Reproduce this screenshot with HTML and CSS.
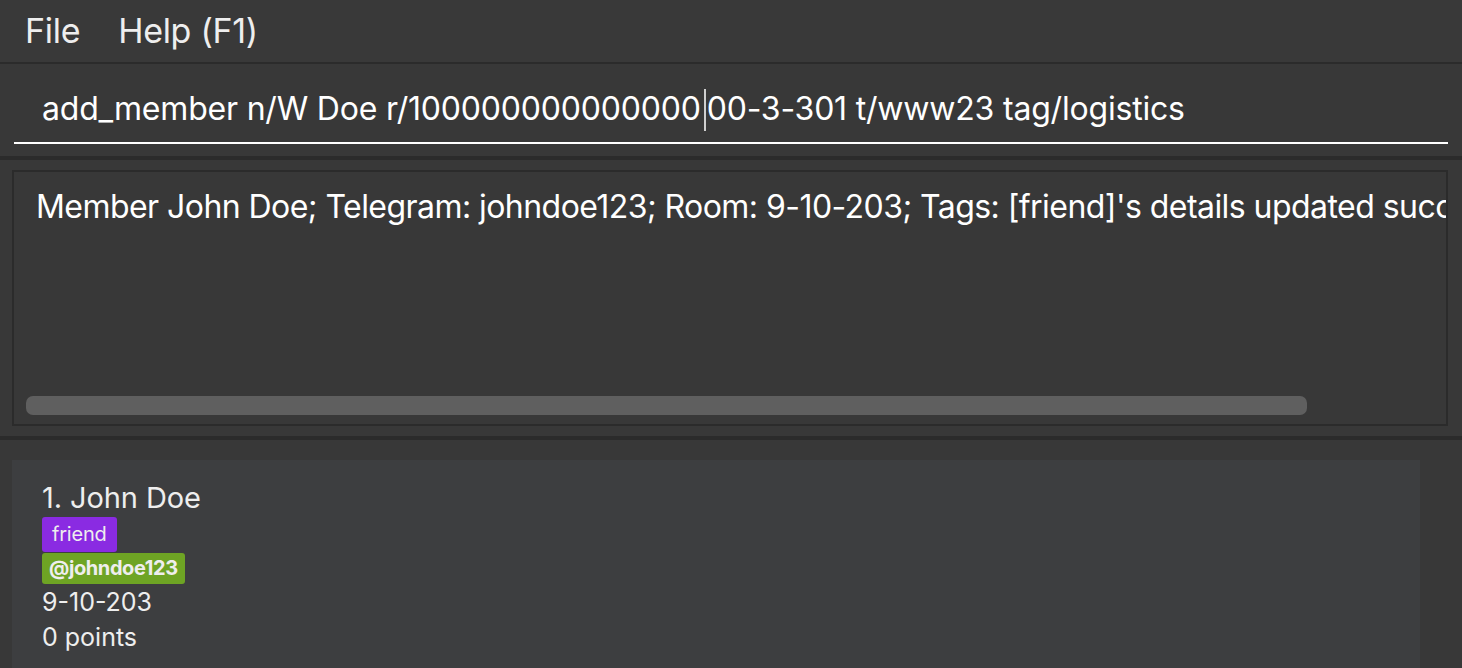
FILE: index.html
```html
<!DOCTYPE html>
<html>
<head>
<meta charset="utf-8">
<link rel="stylesheet" href="styles.css">
</head>
<body>
<div class="app">
  <div class="menubar">
    <span class="menu-item">File</span>
    <span class="menu-item">Help (F1)</span>
  </div>
  <div class="command-area">
    <div class="command-box">
      <span class="command-text">add_member n/W Doe r/100000000000000<span class="caret"></span>00-3-301 t/www23 tag/logistics</span>
    </div>
  </div>
  <div class="result-area">
    <div class="result-box">
      <div class="result-text">Member John Doe; Telegram: johndoe123; Room: 9-10-203; Tags: [friend]'s details updated successfully</div>
      <div class="scrollbar"><div class="thumb"></div></div>
    </div>
  </div>
  <div class="list-area">
    <div class="card">
      <div class="name">1. John Doe</div>
      <div class="tags"><span class="tag">friend</span></div>
      <div class="tags"><span class="telegram">@johndoe123</span></div>
      <div class="line">9-10-203</div>
      <div class="line">0 points</div>
    </div>
  </div>
</div>
</body>
</html>
```
FILE: styles.css
```css
html, body {
  margin: 0;
  padding: 0;
  background: #383838;
  font-family: Inter, "Noto Sans", sans-serif;
  color: #ffffff;
  overflow: hidden;
}
.app {
  width: 1462px;
  height: 668px;
  display: flex;
  flex-direction: column;
}
.menubar {
  height: 62px;
  border-bottom: 2px solid #2b2b2b;
  display: flex;
  align-items: center;
  padding-left: 25px;
  gap: 38px;
  box-sizing: content-box;
  background: #393939;
}
.menu-item {
  font-size: 34px;
  color: #eeeeee;
  letter-spacing: -0.3px;
  margin-top: -2px;
}
.command-area {
  height: 92px;
  border-bottom: 4px solid #2b2b2b;
  padding: 0 14px;
  box-sizing: content-box;
}
.command-box {
  height: 80px;
  border-bottom: 2px solid #ffffff;
  display: flex;
  align-items: center;
  padding-left: 28px;
  padding-top: 14px;
  box-sizing: border-box;
}
.command-text {
  font-size: 32px;
  letter-spacing: -0.2px;
  white-space: nowrap;
  color: #ffffff;
}
.caret {
  display: inline-block;
  width: 2px;
  height: 42px;
  background: #cfcfcf;
  vertical-align: -11px;
  margin: 0 1px 0 3px;
}
.result-area {
  border-bottom: 4px solid #2b2b2b;
  padding: 10px 14px 10px 12px;
  box-sizing: border-box;
  height: 280px;
}
.result-box {
  height: 256px;
  border: 2px solid #2b2b2b;
  box-sizing: border-box;
  overflow: hidden;
  display: flex;
  flex-direction: column;
  justify-content: space-between;
  padding: 15px 0 9px 22px;
}
.result-text {
  font-size: 32px;
  letter-spacing: -0.55px;
  white-space: nowrap;
  color: #ffffff;
}
.scrollbar {
  margin-left: -10px;
}
.thumb {
  width: 1281px;
  height: 19px;
  border-radius: 7px;
  background: #5f5f5f;
}
.list-area {
  flex: 1;
  padding: 20px 42px 0 12px;
}
.card {
  background: #3d3e40;
  height: 100%;
  padding: 20px 30px 0 30px;
  box-sizing: border-box;
  display: flex;
  flex-direction: column;
  align-items: flex-start;
}
.name {
  font-size: 29px;
  color: #eeeeee;
  line-height: 36px;
  letter-spacing: -0.1px;
}
.tags {
  display: flex;
  margin-top: 1px;
}
.tag {
  background: #8a2be2;
  color: #eeeeee;
  font-size: 20px;
  padding: 0 10px;
  height: 35px;
  line-height: 35px;
  border-radius: 3px;
  letter-spacing: -0.2px;
}
.telegram {
  background: #6ea424;
  color: #eeeeee;
  font-size: 20px;
  font-weight: 700;
  padding: 0 7px;
  height: 31px;
  line-height: 31px;
  border-radius: 3px;
  letter-spacing: -0.4px;
}
.line {
  font-size: 25px;
  color: #eeeeee;
  line-height: 34px;
  margin-top: 1px;
}
```
